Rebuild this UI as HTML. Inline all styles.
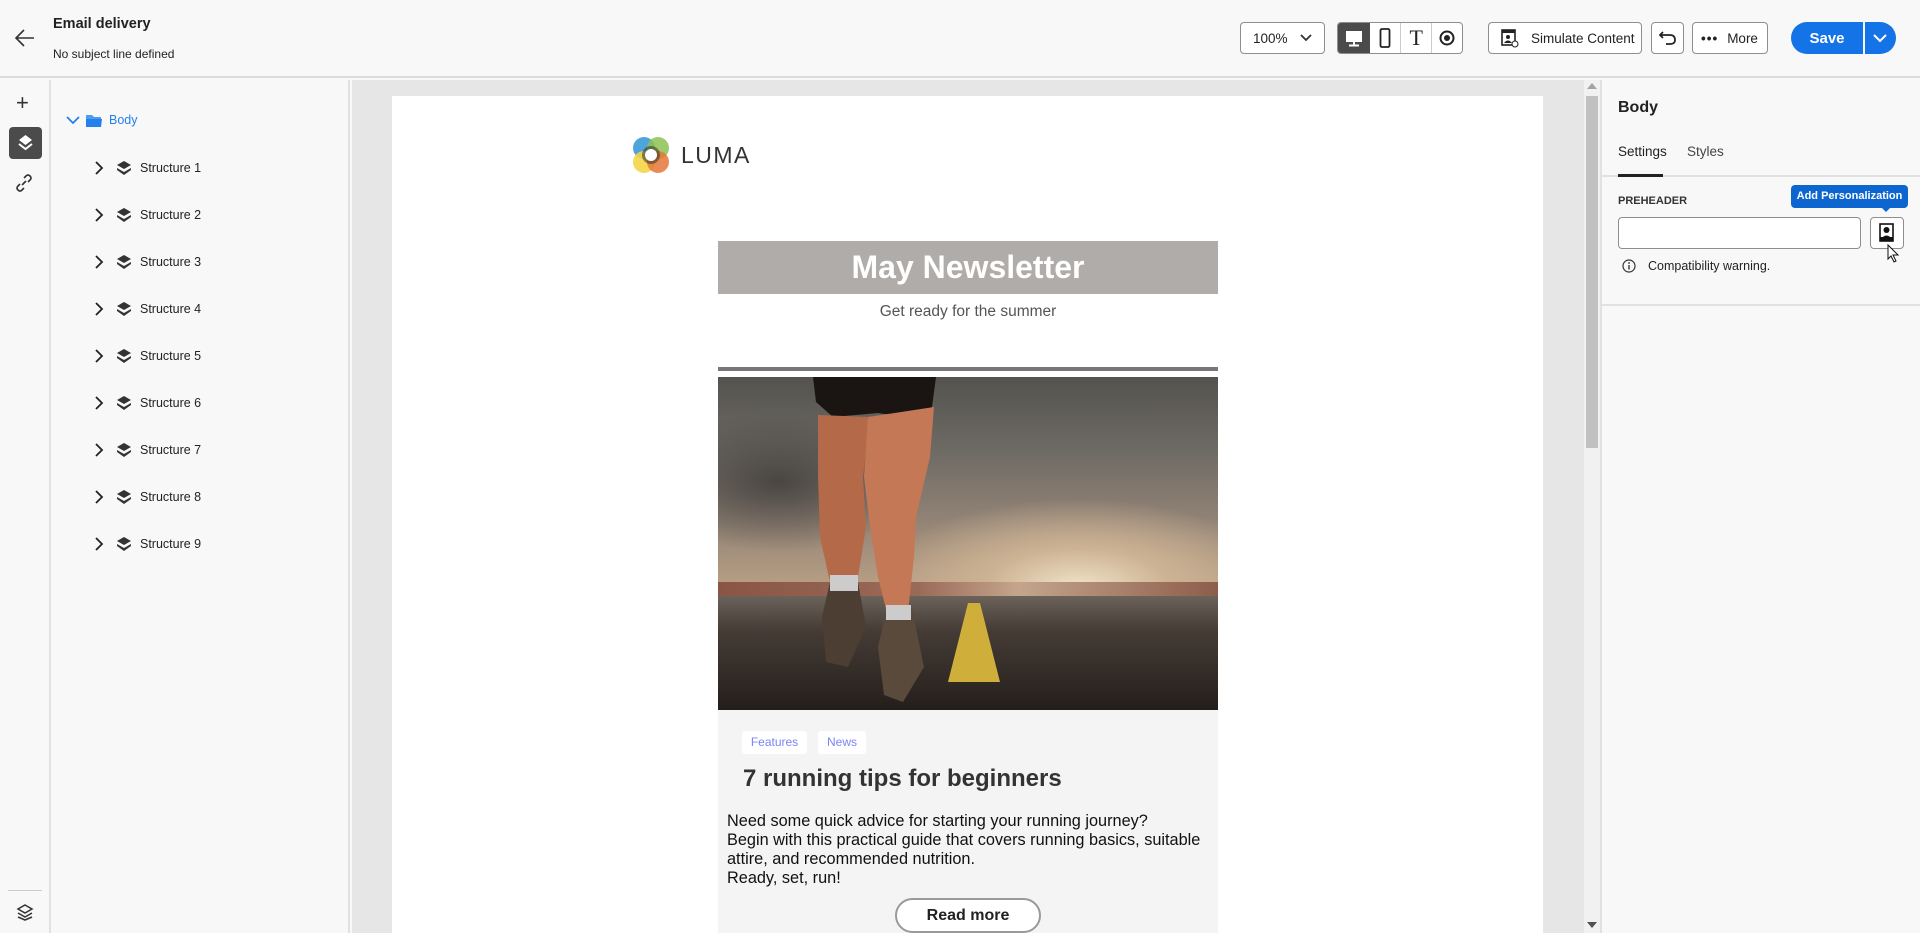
<!DOCTYPE html>
<html><head><meta charset="utf-8">
<style>
*{box-sizing:border-box;margin:0;padding:0}
body{width:1920px;height:933px;overflow:hidden;background:#f8f8f8;font-family:"Liberation Sans",sans-serif;color:#222;position:relative}
.a{position:absolute}
.btn{position:absolute;border:1px solid #8e8e8e;border-radius:4px;background:#fff;height:32px;top:22px;display:flex;align-items:center;font-size:13.5px;color:#222}
.tree{font-size:12.5px;color:#222}
.row{position:absolute;left:0;height:20px;display:flex;align-items:center}
</style></head><body>
<div class="a" style="left:0;top:0;width:1920px;height:78px;background:#f8f8f8;border-bottom:2px solid #dcdcdc"></div>
<svg class="a" style="left:14px;top:28px" width="22" height="20" viewBox="0 0 22 20"><path d="M10 2 L2 10 L10 18 M2 10 H20" fill="none" stroke="#333" stroke-width="1.6"/></svg>
<div class="a" style="left:53px;top:16px;font-size:14.5px;font-weight:bold">Email delivery</div>
<div class="a" style="left:53px;top:47px;font-size:12px">No subject line defined</div>

<div class="btn" style="left:1240px;width:85px;padding-left:12px">100%<svg style="position:absolute;right:12px;top:11px" width="12" height="8"><path d="M1 1 L6 6 L11 1" fill="none" stroke="#333" stroke-width="1.8"/></svg></div>
<div class="btn" style="left:1337px;width:126px;overflow:hidden">
 <div style="width:33px;height:32px;background:#4b4b4b;display:flex;align-items:center;justify-content:center"><svg width="18" height="18"><rect x="1" y="2" width="16" height="11" fill="#fff"/><rect x="8" y="13" width="2" height="3" fill="#fff"/><rect x="4" y="15.5" width="10" height="2" fill="#fff"/></svg></div>
 <div style="width:31px;height:32px;border-right:1px solid #ccc;display:flex;align-items:center;justify-content:center"><svg width="12" height="20"><rect x="1.5" y="1" width="9" height="18" rx="1.5" fill="none" stroke="#222" stroke-width="1.8"/></svg></div>
 <div style="width:32px;height:32px;border-right:1px solid #ccc;display:flex;align-items:center;justify-content:center;font-family:'Liberation Serif';font-size:22px">T</div>
 <div style="width:30px;display:flex;align-items:center;justify-content:center"><svg width="16" height="16"><circle cx="8" cy="8" r="6.5" fill="none" stroke="#222" stroke-width="2"/><circle cx="8" cy="8" r="3" fill="#222"/></svg></div>
</div>
<div class="btn" style="left:1488px;width:154px;padding-left:12px"><svg width="18" height="20" style="margin-right:12px"><rect x="1" y="2" width="13" height="15" fill="none" stroke="#222" stroke-width="1.6"/><rect x="1" y="2" width="13" height="3" fill="#222"/><circle cx="7" cy="9" r="2" fill="#222"/><path d="M3 15 Q7 10 11 15Z" fill="#222"/><circle cx="14" cy="16" r="3" fill="#fff" stroke="#222"/></svg>Simulate Content</div>
<div class="btn" style="left:1651px;width:33px;justify-content:center"><svg width="18" height="16"><path d="M4 2 L1 5 L4 8 M1 5 H11 Q16 5 16 10 Q16 14 11 14 H7" fill="none" stroke="#222" stroke-width="1.7"/></svg></div>
<div class="btn" style="left:1692px;width:76px;padding-left:8px"><span style="letter-spacing:1px;font-weight:bold;margin-right:9px">•••</span>More</div>
<div class="a" style="left:1791px;top:22px;width:105px;height:32px;border-radius:16px;background:#1473e6;display:flex;align-items:center;color:#fff;font-size:15px;font-weight:bold"><div style="width:72px;text-align:center">Save</div><div style="width:2px;height:32px;background:#f8f8f8"></div><svg style="margin-left:8px" width="14" height="9"><path d="M1 1 L7 7 L13 1" fill="none" stroke="#fff" stroke-width="2"/></svg></div>

<div class="a" style="left:0;top:80px;width:51px;height:853px;background:#f8f8f8;border-right:2px solid #e1e1e1"></div>
<div class="a" style="left:16px;top:90px;font-size:22px;color:#333">+</div>
<div class="a" style="left:9px;top:127px;width:33px;height:32px;border-radius:4px;background:#4b4b4b"></div>
<svg class="a" style="left:17px;top:134px" width="17" height="18"><path d="M8.5 1 L15 6 L8.5 11 L2 6Z" fill="#fff"/><path d="M2 10 L8.5 15 L15 10" fill="none" stroke="#fff" stroke-width="2"/></svg>
<svg class="a" style="left:15px;top:174px" width="18" height="18"><path d="M7 11 L11 7 M9 4 L11 2 Q13 0 15 2 Q17 4 15 6 L13 8 M9 14 L7 16 Q5 18 3 16 Q1 14 3 12 L5 10" fill="none" stroke="#333" stroke-width="1.6"/></svg>
<div class="a" style="left:8px;top:890px;width:34px;height:1px;background:#ccc"></div>
<svg class="a" style="left:16px;top:903px" width="18" height="18"><path d="M9 2 L16 6 L9 10 L2 6Z M2 10 L9 14 L16 10 M2 14 L9 17 L16 14" fill="none" stroke="#333" stroke-width="1.5"/></svg>

<div class="a" style="left:52px;top:80px;width:298px;height:853px;background:#f8f8f8;border-right:2px solid #e1e1e1"></div>
<div class="tree">
<div class="row" style="left:66px;top:110px;color:#2680eb"><svg width="14" height="10"><path d="M1 2 L7 8 L13 2" fill="none" stroke="#2680eb" stroke-width="1.8"/></svg><svg style="margin-left:5px" width="18" height="15"><path d="M1 2 H7 L9 4 H16 V14 H1Z" fill="#4b9cf5"/><path d="M1 6 H17 L16 14 H1Z" fill="#2680eb"/></svg><span style="margin-left:6px">Body</span></div>
</div>
<div id="tr" class="tree"></div>

<div class="a" style="left:352px;top:80px;width:1232px;height:853px;background:#e6e6e6"></div>
<div class="a" style="left:1584px;top:80px;width:16px;height:853px;background:#f1f1f1"></div>
<div class="a" style="left:1586px;top:96px;width:12px;height:352px;background:#c1c1c1"></div>
<div class="a" style="left:1587px;top:83px;width:0;height:0;border:5px solid transparent;border-bottom:6px solid #a3a3a3;border-top:0"></div>
<div class="a" style="left:1587px;top:922px;width:0;height:0;border:5px solid transparent;border-top:6px solid #505050;border-bottom:0"></div>
<div class="a" style="left:392px;top:96px;width:1151px;height:837px;background:#fff"></div>
<svg class="a" style="left:632px;top:136px" width="38" height="38" viewBox="0 0 38 38">
<circle cx="12" cy="12" r="11" fill="#3b9ad9" opacity=".9"/><circle cx="26" cy="12" r="11" fill="#8cc152" opacity=".85"/><circle cx="12" cy="26" r="11" fill="#f5d547" opacity=".9"/><circle cx="26" cy="26" r="11" fill="#e5773a" opacity=".85"/><circle cx="19" cy="19" r="9" fill="#3f3a2a" opacity=".6"/><circle cx="19" cy="19" r="6" fill="#fff"/></svg>
<div class="a" style="left:681px;top:142px;font-size:23px;letter-spacing:1.5px;color:#333">LUMA</div>
<div class="a" style="left:718px;top:241px;width:500px;height:53px;background:#b0aca9;color:#fff;font-size:32px;font-weight:bold;text-align:center;line-height:53px">May Newsletter</div>
<div class="a" style="left:718px;top:303px;width:500px;text-align:center;font-size:15.5px;color:#555">Get ready for the summer</div>
<div class="a" style="left:718px;top:367px;width:500px;height:4px;background:#777"></div>
<div class="a" style="left:718px;top:377px;width:500px;height:333px;overflow:hidden;background:#2d2723">
 <div class="a" style="left:0;top:0;width:500px;height:210px;background:radial-gradient(ellipse 260px 110px at 72% 100%,#f0e2c6 0%,#cdb394 35%,rgba(150,130,110,0) 80%),radial-gradient(ellipse 140px 70px at 12% 50%,rgba(60,58,56,.8),transparent),linear-gradient(180deg,#54534f 0%,#6e6a64 35%,#8e8074 65%,#b89f84 100%)"></div>
 <div class="a" style="left:0;top:205px;width:500px;height:14px;background:linear-gradient(90deg,#8a5446,#9a6a58 40%,#c4a58c 60%,#8d5d4c)"></div>
 <div class="a" style="left:0;top:219px;width:500px;height:114px;background:linear-gradient(180deg,#6b625a,#453c36 30%,#332b26 70%,#241e1a)"></div>
 <svg class="a" style="left:0;top:0" width="500" height="333"><path d="M250 226 L262 226 L282 305 L230 305Z" fill="#cfae3a"/>
 <path d="M95 0 H218 L214 30 L200 42 L160 36 L115 40 L98 25Z" fill="#1a1512"/>
 <path d="M100 38 L152 40 L145 100 L148 150 L140 200 L128 212 L112 205 L102 160 L100 100Z" fill="#b46a48"/>
 <path d="M150 40 L216 30 L212 80 L198 140 L196 180 L190 235 L170 240 L160 200 L152 150 L146 100Z" fill="#c47856"/>
 <path d="M112 205 L140 205 L148 250 L130 290 L108 285 L104 240Z" fill="#4c3e32"/>
 <path d="M168 235 L194 232 L206 290 L185 325 L166 318 L160 270Z" fill="#5a4a3c"/>
 <path d="M112 198 L140 198 L140 214 L112 214Z M168 228 L193 228 L193 243 L168 243Z" fill="#ccc"/></svg>
</div>
<div class="a" style="left:718px;top:710px;width:500px;height:223px;background:#f4f4f4"></div>
<div class="a" style="left:742px;top:731px;width:65px;height:23px;background:#fff;border-radius:3px;font-size:12px;color:#7b84f5;text-align:center;line-height:23px">Features</div>
<div class="a" style="left:818px;top:731px;width:48px;height:23px;background:#fff;border-radius:3px;font-size:12px;color:#7b84f5;text-align:center;line-height:23px">News</div>
<div class="a" style="left:743px;top:765px;font-size:24px;font-weight:bold;color:#333">7 running tips for beginners</div>
<div class="a" style="left:727px;top:812px;font-size:16.3px;line-height:19px;color:#111">Need some quick advice for starting your running journey?<br>Begin with this practical guide that covers running basics, suitable<br>attire, and recommended nutrition.<br>Ready, set, run!</div>
<div class="a" style="left:895px;top:898px;width:146px;height:35px;border:2px solid #999;border-radius:18px;background:#fff;text-align:center;line-height:31px;font-size:16px;font-weight:bold;color:#222">Read more</div>

<div class="a" style="left:1600px;top:80px;width:2px;height:853px;background:#e1e1e1"></div>
<div class="a" style="left:1618px;top:99px;font-size:16px;font-weight:bold">Body</div>
<div class="a" style="left:1618px;top:144px;font-size:13.5px">Settings</div>
<div class="a" style="left:1687px;top:144px;font-size:13.5px;color:#444">Styles</div>
<div class="a" style="left:1602px;top:175px;width:318px;height:2px;background:#e1e1e1"></div>
<div class="a" style="left:1618px;top:174px;width:45px;height:3px;background:#222"></div>
<div class="a" style="left:1618px;top:195px;font-size:11px;font-weight:bold;color:#333">PREHEADER</div>
<div class="a" style="left:1791px;top:185px;width:117px;height:23px;background:#0d66d0;border-radius:4px;color:#fff;font-size:11px;font-weight:bold;text-align:center;line-height:23px">Add Personalization</div>
<div class="a" style="left:1882px;top:208px;width:0;height:0;border:4px solid transparent;border-top:4px solid #0d66d0"></div>
<div class="a" style="left:1618px;top:217px;width:243px;height:32px;border:1px solid #8e8e8e;border-radius:4px;background:#fff"></div>
<div class="a" style="left:1870px;top:217px;width:34px;height:32px;border:1px solid #8e8e8e;border-radius:4px;background:#fff"></div>
<svg class="a" style="left:1879px;top:223px" width="16" height="20"><rect x="1" y="1" width="13" height="17" fill="none" stroke="#111" stroke-width="1.6"/><circle cx="7.5" cy="7" r="3" fill="#111"/><path d="M2 16 Q7.5 9 13 16Z" fill="#111"/><rect x="1" y="14" width="13" height="4" fill="#111"/></svg>
<svg class="a" style="left:1887px;top:244px" width="14" height="20"><path d="M1 1 L1 15 L4 12 L7 18 L9 17 L6 11 L11 11Z" fill="#fff" stroke="#111" stroke-width="1"/></svg>
<svg class="a" style="left:1622px;top:259px" width="14" height="14"><circle cx="7" cy="7" r="6" fill="none" stroke="#333" stroke-width="1.2"/><rect x="6.3" y="6" width="1.4" height="4.5" fill="#333"/><circle cx="7" cy="4" r=".9" fill="#333"/></svg>
<div class="a" style="left:1648px;top:259px;font-size:12.5px;color:#222">Compatibility warning.</div>
<div class="a" style="left:1602px;top:304px;width:318px;height:2px;background:#e1e1e1"></div>

<script>
var h='';for(var i=1;i<=9;i++){var y=158+(i-1)*47;h+='<div class="row" style="left:94px;top:'+y+'px"><svg width="10" height="14"><path d="M2 1 L8 7 L2 13" fill="none" stroke="#222" stroke-width="1.8"/></svg><svg style="margin-left:12px" width="16" height="16"><path d="M8 1 L15 5 L8 9 L1 5Z" fill="#333"/><path d="M1 8 L8 12 L15 8 L15 10 L8 15 L1 10Z" fill="#333"/></svg><span style="margin-left:8px">Structure '+i+'</span></div>';}
document.getElementById('tr').innerHTML=h;
</script>
</body></html>
